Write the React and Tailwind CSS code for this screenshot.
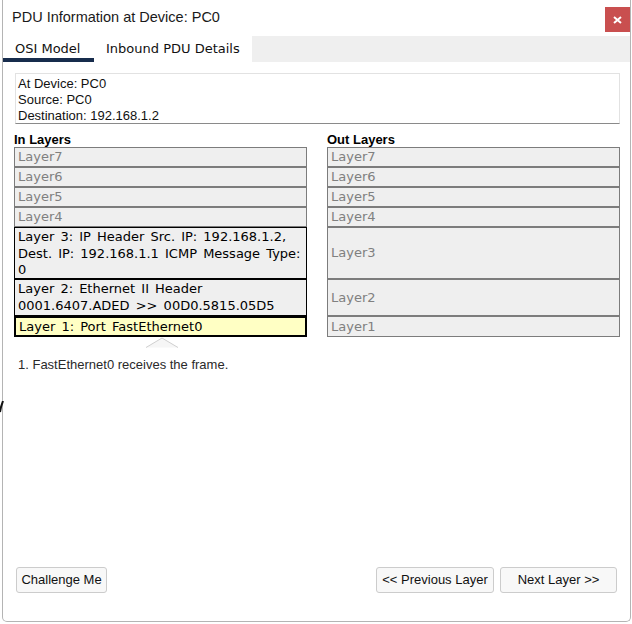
import React from 'react';

const inRows = [
  { h: 'h-[20px]', text: ['Layer7'], state: 'off' },
  { h: 'h-[20px]', text: ['Layer6'], state: 'off' },
  { h: 'h-[20px]', text: ['Layer5'], state: 'off' },
  { h: 'h-[20px]', text: ['Layer4'], state: 'off' },
  {
    h: 'h-[52px]',
    text: ['Layer 3: IP Header Src. IP: 192.168.1.2,', 'Dest. IP: 192.168.1.1 ICMP Message Type:', '0'],
    state: 'on',
  },
  { h: 'h-[37px]', text: ['Layer 2: Ethernet II Header', '0001.6407.ADED >> 00D0.5815.05D5'], state: 'on' },
  { h: 'h-[21px]', text: ['Layer 1: Port FastEthernet0'], state: 'current' },
];

const outRows = [
  { h: 'h-[20px]', label: 'Layer7' },
  { h: 'h-[20px]', label: 'Layer6' },
  { h: 'h-[20px]', label: 'Layer5' },
  { h: 'h-[20px]', label: 'Layer4' },
  { h: 'h-[52px]', label: 'Layer3' },
  { h: 'h-[37px]', label: 'Layer2' },
  { h: 'h-[21px]', label: 'Layer1' },
];

const InBox = ({ row }) => {
  if (row.state === 'off') {
    return (
      <div className={`${row.h} border border-[#7c7c7c] bg-[#efefef] pl-[3px] flex items-center text-[#808080] leading-[16px]`}>
        {row.text[0]}
      </div>
    );
  }
  if (row.state === 'current') {
    return (
      <div className={`${row.h} border-2 border-black bg-[#ffffc4] pl-[3px] flex items-center text-black leading-[16px]`}>
        {row.text[0]}
      </div>
    );
  }
  return (
    <div className={`${row.h} border border-black bg-[#efefef] pl-[3px] pt-[1px] text-black leading-[16.5px] whitespace-nowrap`}>
      {row.text.map((t) => (
        <div key={t}>{t}</div>
      ))}
    </div>
  );
};

const Button = ({ children, w }) => (
  <button
    className={`${w} h-[26px] bg-[#f8f8f8] border border-[#cccccc] rounded-[3px] text-[13px] text-[#111] font-['Liberation_Sans',Arial,sans-serif]`}
  >
    {children}
  </button>
);

export default function App() {
  return (
    <div className="relative w-[632px] h-[624px] bg-white overflow-hidden">
      {/* bit of something behind the window */}
      <svg className="absolute left-0 top-[401px]" width="4" height="12" viewBox="0 0 4 12">
        <path d="M3 0 L1 6 L0 11" stroke="#111" strokeWidth="2" fill="none" />
      </svg>

      <div className="ml-[2px] w-[629px] h-[622px] border-l border-r border-b border-[#b4b4b4] rounded-b-[5px] flex flex-col">
        {/* title bar */}
        <div className="h-[36px] flex items-start justify-between">
          <div className="pl-[9px] pt-[8px] text-[14.5px] leading-[18px] text-[#1a1a1a] font-['Liberation_Sans',Arial,sans-serif]">
            PDU Information at Device: PC0
          </div>
          <button className="mt-[7px] w-[25px] h-[25px] bg-[#c94f4f] flex items-center justify-center">
            <svg width="9" height="8" viewBox="0 0 9 8">
              <path d="M1 1 L8 7 M8 1 L1 7" stroke="white" strokeWidth="2" />
            </svg>
          </button>
        </div>

        {/* tabs */}
        <div className="h-[26px] bg-[#efefef] flex font-['DejaVu_Sans',Verdana,sans-serif] text-[13px] text-[#111]">
          <div className="w-[91px] bg-white pt-[4px] border-b-4 border-[#172c4c] pl-[12px] leading-[18px]">OSI Model</div>
          <div className="w-[158px] bg-white pt-[4px] border-b-4 border-transparent pl-[12px] leading-[18px]">Inbound PDU Details</div>
        </div>

        {/* body */}
        <div className="flex-1 flex flex-col pl-[11px]">
          <div className="mt-[11px] ml-[1px] w-[605px] h-[51px] border border-[#e2e2e2] border-b-[#8a8a8a] pl-[2px] pt-[2px] text-[13px] leading-[16px] text-[#111] font-['Liberation_Sans',Arial,sans-serif]">
            <div>At Device: PC0</div>
            <div>Source: PC0</div>
            <div>Destination: 192.168.1.2</div>
          </div>

          <div className="mt-[8px] flex gap-[20px] font-['DejaVu_Sans',Verdana,sans-serif] text-[13px] [word-spacing:2px]">
            <div className="w-[293px] flex flex-col">
              <div className="h-[15px] leading-[15px] font-bold text-[13px] text-black font-['Liberation_Sans',Arial,sans-serif] [word-spacing:0px]">In Layers</div>
              {inRows.map((r, i) => (
                <InBox key={i} row={r} />
              ))}
              <div className="ml-[131px] h-[10px]">
                <svg width="34" height="11" viewBox="0 0 34 11">
                  <path d="M1 10.5 L17 1 L33 10.5" stroke="#cfcfcf" strokeWidth="1" fill="#f6f6f6" />
                </svg>
              </div>
            </div>
            <div className="w-[293px] flex flex-col">
              <div className="h-[15px] leading-[15px] font-bold text-[13px] text-black font-['Liberation_Sans',Arial,sans-serif] [word-spacing:0px]">Out Layers</div>
              {outRows.map((r) => (
                <div
                  key={r.label}
                  className={`${r.h} border border-[#7c7c7c] bg-[#efefef] pl-[3px] flex items-center text-[#808080] leading-[16px]`}
                >
                  {r.label}
                </div>
              ))}
            </div>
          </div>

          <div className="mt-[10px] ml-[4px] text-[13px] leading-[16px] text-[#2a2a2a] font-['Liberation_Sans',Arial,sans-serif]">
            1. FastEthernet0 receives the frame.
          </div>

          <div className="mt-auto mb-[28px] flex items-center pr-[13px]">
            <div className="ml-[2px]">
              <Button w="w-[91px]">Challenge Me</Button>
            </div>
            <div className="ml-auto flex gap-[6px]">
              <Button w="w-[118px]">&lt;&lt; Previous Layer</Button>
              <Button w="w-[117px]">Next Layer &gt;&gt;</Button>
            </div>
          </div>
        </div>
      </div>
    </div>
  );
}
